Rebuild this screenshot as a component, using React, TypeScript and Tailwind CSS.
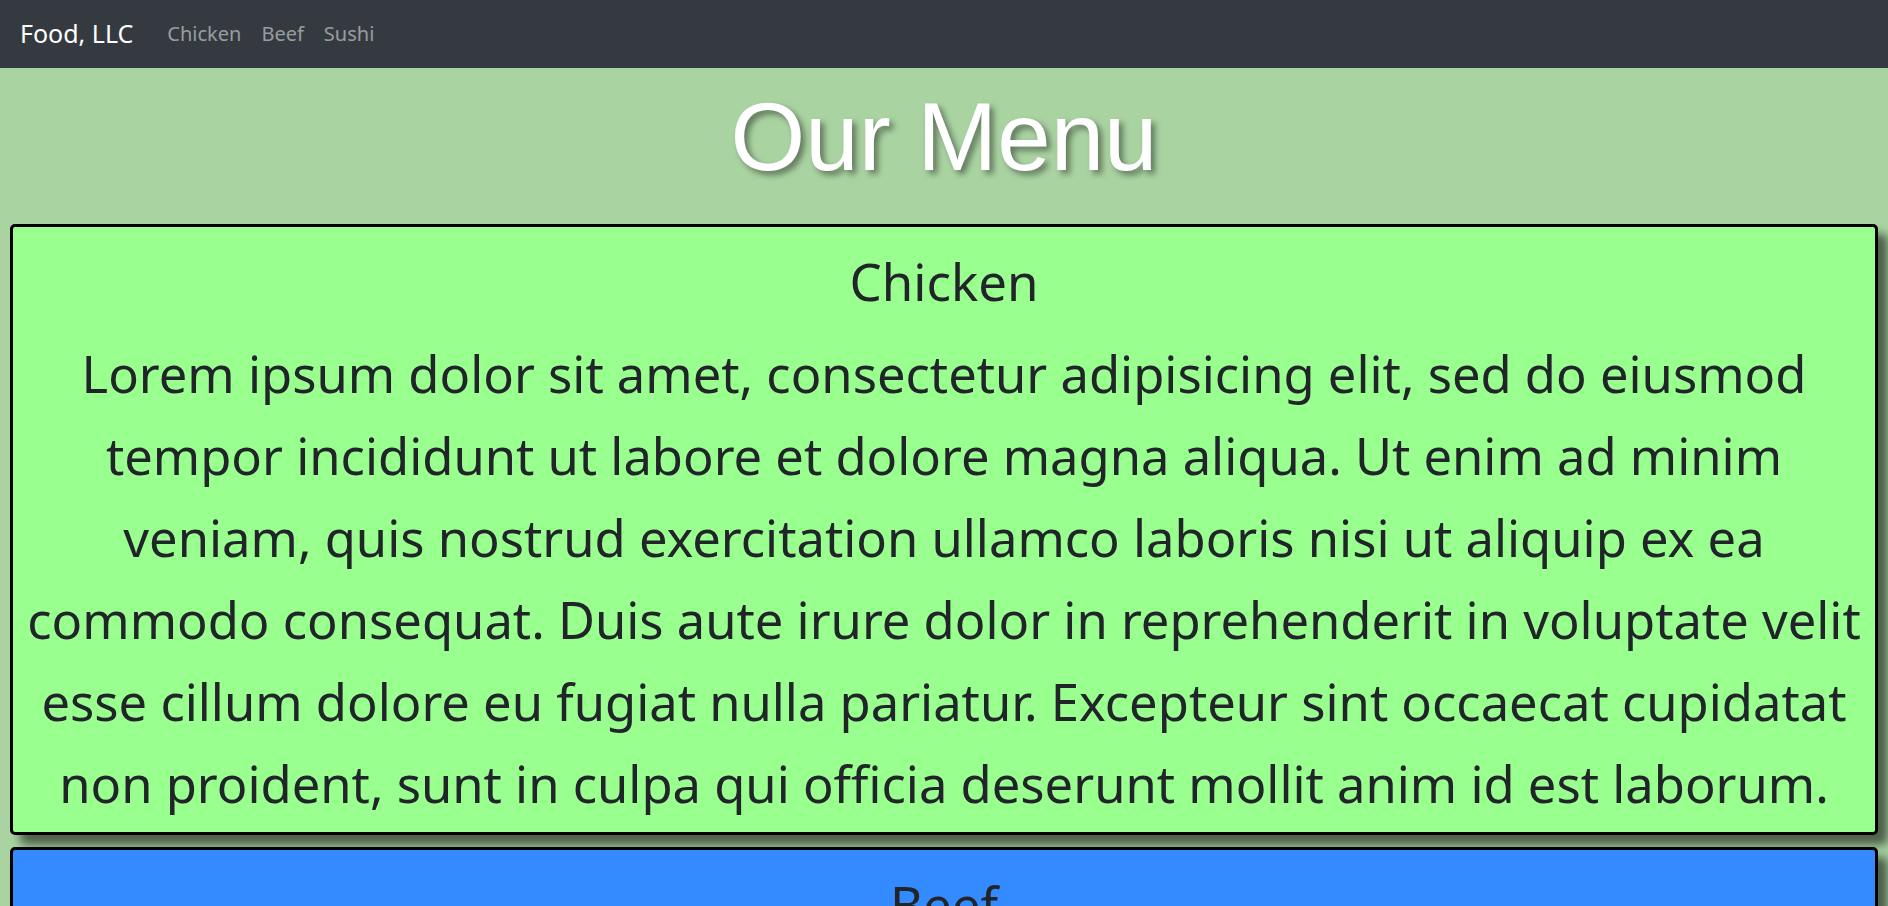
const lorem = [
  'Lorem ipsum dolor sit amet, consectetur adipisicing elit, sed do eiusmod',
  'tempor incididunt ut labore et dolore magna aliqua. Ut enim ad minim',
  'veniam, quis nostrud exercitation ullamco laboris nisi ut aliquip ex ea',
  'commodo consequat. Duis aute irure dolor in reprehenderit in voluptate velit',
  'esse cillum dolore eu fugiat nulla pariatur. Excepteur sint occaecat cupidatat',
  'non proident, sunt in culpa qui officia deserunt mollit anim id est laborum.',
];

const sections = [
  { name: 'Chicken', bg: 'bg-[#99ff8f]' },
  { name: 'Beef', bg: 'bg-[#348aff]' },
  { name: 'Sushi', bg: 'bg-[#ff9a8f]' },
];

const MenuCard = ({ name, bg }: { name: string; bg: string }) => (
  <section
    className={`${bg} mx-[10px] mb-[12px] rounded-[5px] border-[3px] border-black px-2 pt-[24px] pb-[7px] text-center text-[#212529] shadow-[10px_10px_10px_rgba(0,0,0,0.55)]`}
  >
    <h2 className="text-[51px] leading-[1.2]">{name}</h2>
    <p className="mt-[21px] text-[50.7px] leading-[82px]">
      {lorem.map((line, i) => (
        <span key={i}>
          {line}
          {i < lorem.length - 1 && <br />}
        </span>
      ))}
    </p>
  </section>
);

export default function App() {
  return (
    <div className="min-h-screen bg-[#aad3a2] font-['Segoe_UI','Noto_Sans',sans-serif]">
      {/* navbar */}
      <nav className="flex h-[68px] items-center bg-[#343a40] px-5">
        <span className="mr-[24px] text-[25px] text-white">Food, LLC</span>
        <a className="px-[10px] text-[20px] text-white/50">Chicken</a>
        <a className="px-[10px] text-[20px] text-white/50">Beef</a>
        <a className="px-[10px] text-[20px] text-white/50">Sushi</a>
      </nav>

      <h1 className="mt-[11px] mb-[30px] text-center font-['Liberation_Sans',Arial,sans-serif] text-[96px] leading-[1.2] text-white [text-shadow:4px_4px_6px_rgba(0,0,0,0.45)]">
        Our Menu
      </h1>

      {sections.map((s) => (
        <MenuCard key={s.name} name={s.name} bg={s.bg} />
      ))}
    </div>
  );
}
